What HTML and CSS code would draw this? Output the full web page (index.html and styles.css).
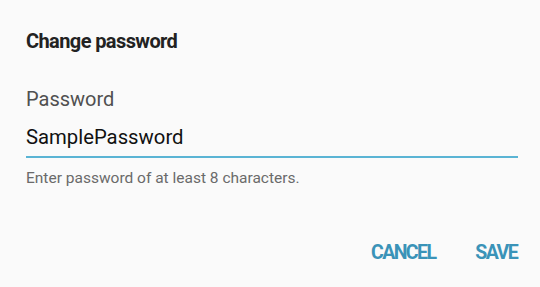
FILE: index.html
```html
<!DOCTYPE html>
<html>
<head>
<meta charset="utf-8">
<link rel="stylesheet" href="styles.css">
</head>
<body>
<div class="dialog">
  <h1 class="title">Change password</h1>
  <div class="field">
    <div class="label">Password</div>
    <div class="value">SamplePassword</div>
    <div class="underline"></div>
    <div class="helper">Enter password of at least 8 characters.</div>
  </div>
  <div class="actions">
    <span class="btn">CANCEL</span>
    <span class="btn">SAVE</span>
  </div>
</div>
</body>
</html>
```
FILE: styles.css
```css
html, body {
  margin: 0;
  padding: 0;
  background: #fafafa;
}
.dialog {
  width: 540px;
  height: 287px;
  box-sizing: border-box;
  padding: 29px 22px 0 26px;
  font-family: Roboto, "Noto Sans", sans-serif;
}
.title {
  margin: 0;
  font-size: 20px;
  font-weight: 700;
  line-height: 24px;
  color: #222;
  letter-spacing: -0.6px;
}
.field {
  margin-top: 34px;
}
.label {
  font-size: 20px;
  line-height: 24px;
  color: #505050;
}
.value {
  margin-top: 14px;
  font-size: 20.3px;
  line-height: 24px;
  color: #111;
}
.underline {
  margin-top: 7px;
  height: 2px;
  background: #5ab4d4;
}
.helper {
  margin-top: 11px;
  font-size: 15.5px;
  line-height: 18px;
  color: #6a6a6a;
}
.actions {
  display: flex;
  justify-content: flex-end;
  gap: 40px;
  margin-top: 55px;
  padding-right: 1px;
}
.btn {
  font-size: 19.5px;
  font-weight: 700;
  line-height: 22px;
  color: #3a93b8;
  letter-spacing: -1.6px;
}
```
